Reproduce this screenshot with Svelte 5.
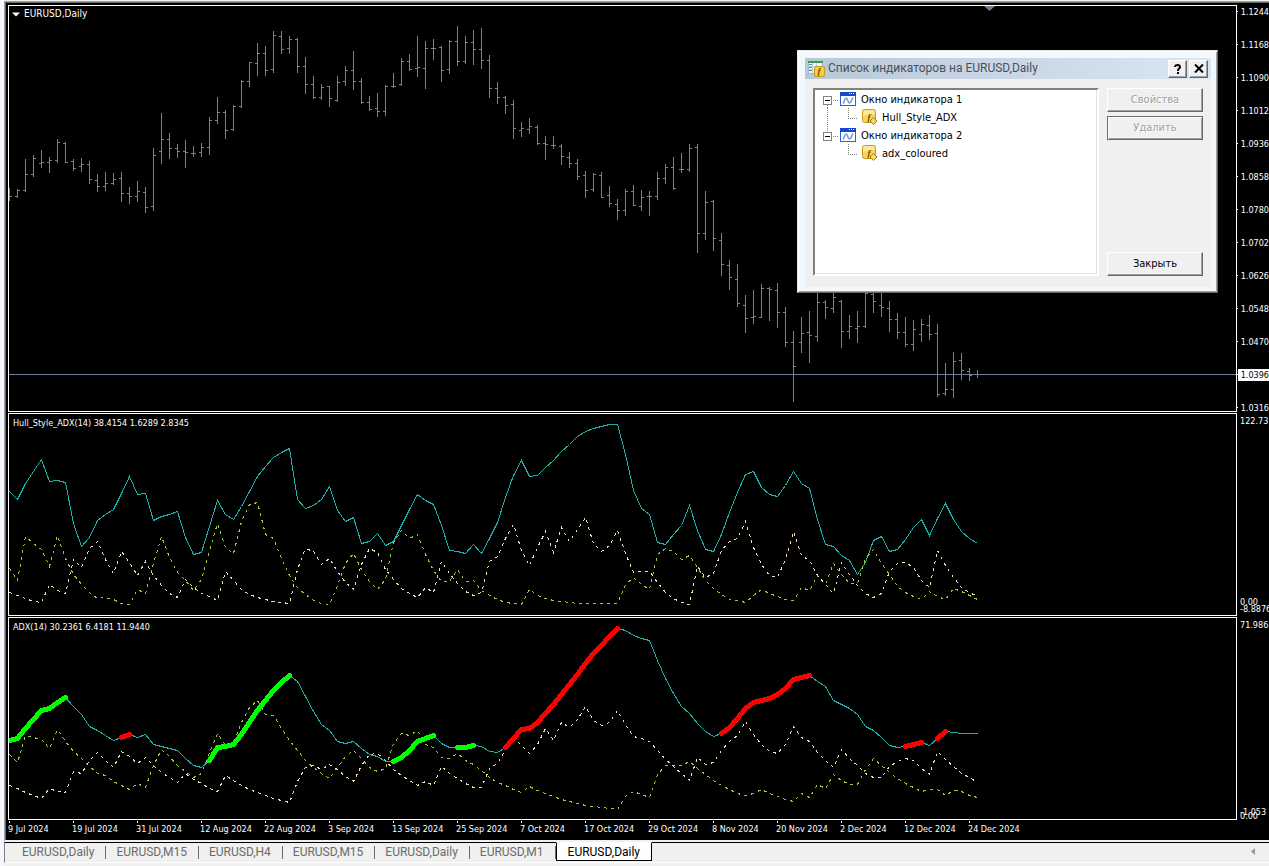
<script>
  const STEP = 8;

  // open, high, low, close as vertical plot positions
  const bars = [
    [196,188,200,196],[196,189,197,190],[190,159,191,174],[174,155,176,158],[163,150,167,162],[162,157,172,160],[160,139,162,142],[143,142,162,162],
    [161,159,170,168],[166,158,171,164],[164,161,183,179],[180,174,191,186],[186,172,190,183],[183,173,184,179],[178,172,201,193],[193,187,203,196],
    [196,181,201,191],[192,187,212,207],[206,148,210,155],[151,113,163,139],[139,133,158,148],[148,144,157,151],[151,140,167,152],[153,146,156,153],
    [152,143,156,147],[147,117,154,120],[120,97,123,112],[112,110,138,130],[129,105,130,106],[106,80,107,81],[81,62,86,62],[63,43,75,53],
    [53,46,75,70],[69,31,72,35],[36,31,53,49],[48,36,53,39],[39,38,72,66],[66,57,93,84],[84,76,98,97],[97,84,99,87],
    [86,86,106,98],[100,76,101,82],[81,66,85,70],[70,51,89,81],[81,78,103,102],[102,96,110,109],[108,93,116,111],[111,85,115,86],
    [86,73,87,86],[84,58,85,61],[61,54,70,69],[68,36,76,67],[68,41,88,48],[48,39,59,48],[47,46,81,70],[69,40,73,41],
    [41,26,65,61],[61,36,63,42],[42,30,64,49],[49,28,68,60],[60,55,97,88],[88,82,103,97],[97,96,113,105],[104,100,138,128],
    [130,122,136,128],[129,118,133,126],[127,125,144,143],[143,136,159,144],[145,136,148,145],[146,144,164,156],[157,152,167,163],[163,159,179,176],
    [175,171,197,190],[189,173,191,174],[175,172,197,197],[195,186,206,203],[204,199,219,210],[210,189,215,191],[191,185,205,205],[206,190,210,197],
    [196,191,215,196],[196,172,199,178],[178,164,183,167],[167,157,189,188],[169,153,172,169],[169,144,171,148],[147,144,252,233],[233,191,239,202],
    [201,200,250,238],[240,233,275,264],[265,260,289,277],[279,264,306,303],[305,295,332,318],[317,290,323,316],[317,284,317,288],[288,287,320,289],
    [290,283,327,312],[312,307,346,342],[342,331,401,366],[342,317,352,333],[332,311,362,335],[336,262,341,302],[302,300,318,307],[308,270,312,297],
    [301,300,347,331],[331,315,338,326],[328,311,342,326],[326,280,327,293],[294,288,312,301],[305,285,316,307],[308,301,331,319],[319,313,338,332],
    [332,317,346,344],[344,320,350,329],[334,319,341,324],[325,315,339,334],[333,324,396,394],[393,363,395,389],[389,352,397,361],[360,353,379,370],
    [371,368,380,375],[374,370,377,374]
  ];

  const hullAdx = [491,499,483,471,459,481,480,482,523,546,537,520,514,509,493,476,494,493,520,516,514,511,537,554,552,526,500,514,519,506,491,476,466,457,452,448,499,508,505,499,486,510,521,517,543,541,533,545,541,525,509,494,500,504,525,550,551,553,544,553,538,522,497,475,460,476,475,467,460,451,444,436,431,428,426,424,424,454,490,508,514,542,544,534,525,505,530,549,551,534,512,492,474,471,487,494,496,485,471,483,488,519,544,546,555,560,574,562,540,536,551,549,539,527,519,535,518,503,519,531,538,543];
  const hullPlus = [568,580,536,543,549,566,535,558,574,584,592,598,597,599,603,604,589,593,563,536,557,572,580,590,579,550,523,547,553,521,504,502,534,538,558,575,587,594,600,603,604,585,563,553,569,581,589,579,542,530,538,534,554,570,581,581,569,581,580,590,595,599,602,603,604,589,595,598,600,601,602,603,603,603,603,603,603,584,577,584,589,554,548,551,559,555,567,580,588,594,599,600,602,595,589,593,596,599,600,587,590,575,584,563,574,583,583,558,549,563,574,586,592,596,599,591,596,599,588,591,595,599];
  const hullMinus = [592,595,598,601,602,584,590,593,559,567,548,541,559,573,551,562,575,561,575,585,593,597,579,587,593,596,600,571,580,589,594,597,599,601,602,603,569,548,551,564,558,571,582,589,564,548,552,569,579,588,593,597,587,592,561,573,583,591,595,592,561,556,538,524,550,565,547,531,552,527,541,529,517,543,551,545,530,553,572,571,571,582,592,598,602,604,566,577,573,550,541,538,521,547,564,575,577,559,531,555,560,575,584,593,562,574,585,593,597,593,571,563,562,567,580,587,550,565,577,587,592,596];

  const adx = [740,738,728,719,710,708,702,697,706,714,726,730,735,740,737,734,737,734,744,746,748,750,758,765,767,760,747,746,744,734,722,710,700,690,682,675,681,696,711,724,730,741,743,741,748,754,756,761,761,757,750,741,738,735,743,747,747,747,745,746,751,752,747,738,729,728,722,713,704,694,684,674,663,653,645,636,628,630,635,638,640,660,678,693,706,713,723,731,736,733,727,718,708,702,700,698,694,688,679,677,675,681,686,700,704,708,714,726,730,737,745,747,746,744,742,745,738,731,732,733,733,733];
  const adxPlus = [754,762,735,737,739,748,729,741,751,758,766,773,775,781,785,789,783,787,765,749,756,765,771,777,773,752,733,745,743,722,707,700,714,715,728,740,750,760,767,773,778,767,756,750,758,767,771,768,743,733,735,730,744,747,757,758,753,760,764,770,777,782,785,789,792,786,790,793,796,799,801,803,805,806,807,808,809,796,791,794,797,774,765,765,765,761,768,774,780,785,789,793,795,793,789,793,796,799,801,793,797,784,788,774,780,784,784,769,758,765,772,778,783,787,791,789,789,795,790,791,795,797];
  const adxMinus = [785,788,792,795,798,788,791,792,771,773,760,752,760,767,751,756,763,757,765,772,777,782,773,779,783,788,791,775,780,785,789,792,795,798,800,802,781,767,765,769,764,769,776,781,765,754,753,760,769,775,780,785,781,785,766,773,778,783,787,787,768,763,749,737,745,753,744,728,740,722,727,719,706,720,725,722,710,724,736,738,741,750,759,766,773,780,757,764,762,750,741,735,721,734,744,751,753,744,726,737,741,752,760,767,749,758,765,773,777,777,766,761,758,760,768,774,751,759,766,773,777,782];

  const trends = [
    ['lime', 0, 7], ['red', 14, 15], ['lime', 25, 35], ['lime', 48, 53], ['lime', 56, 58],
    ['red', 62, 76], ['red', 89, 100], ['red', 112, 114], ['red', 116, 117]
  ];

  const prices = ['1.1244','1.1168','1.1090','1.1012','1.0936','1.0858','1.0780','1.0702','1.0626','1.0548','1.0470','1.0396','1.0316'];
  const CURRENT = 11;
  const dates = ['9 Jul 2024','19 Jul 2024','31 Jul 2024','12 Aug 2024','22 Aug 2024','3 Sep 2024','13 Sep 2024','25 Sep 2024','7 Oct 2024','17 Oct 2024','29 Oct 2024','8 Nov 2024','20 Nov 2024','2 Dec 2024','12 Dec 2024','24 Dec 2024'];
  const tabs = ['EURUSD,Daily','EURUSD,M15','EURUSD,H4','EURUSD,M15','EURUSD,Daily','EURUSD,M1','EURUSD,Daily'];
  const tree = [
    { name: 'Окно индикатора 1', child: 'Hull_Style_ADX' },
    { name: 'Окно индикатора 2', child: 'adx_coloured' }
  ];

  let activeTab = $state(6);
  let open = $state(true);

  const points = (ys, from = 0, to = ys.length - 1) =>
    ys.slice(from, to + 1).map((y, k) => `${(from + k) * STEP + 0.5},${y + 0.5}`).join(' ');

  const barPath = bars
    .map(([o, h, l, c], i) => {
      const x = i * STEP;
      return `M${x + 0.5} ${h}V${l + 1}M${x - 2} ${o + 0.5}H${x}M${x + 1} ${c + 0.5}H${x + 3}`;
    })
    .join('');
</script>

{#snippet functionIcon()}
  <svg class="icon" width="16" height="16" viewBox="0 0 16 16" aria-hidden="true">
    <rect x="0.500" y="0.500" width="13" height="13" rx="2" fill="#f5d458" stroke="#c99a1c" />
    <path d="M1 7V3Q1 1 3 1H11Q13 1 13 3V5Q6 5 1 7Z" fill="#fbe994" />
    <text x="7" y="11" class="fn">f</text>
    <path d="M11.500 8.500L15 12L11.500 15.500L8 12Z" fill="#f8dc62" stroke="#a87a12" />
  </svg>
{/snippet}

<div class="app">
  <main class="frame">
    <section class="row">
      <div class="plot">
        <h1 class="caption symbol">
          <svg width="8" height="5" viewBox="0 0 8 5" aria-hidden="true"><path d="M0 0.500H8L4 4.500Z" fill="#fff" /></svg>
          EURUSD,Daily
        </h1>
        <svg class="chart" height="405" role="img" aria-label="EURUSD,Daily">
          <path d="M975 0H986L980.500 5Z" fill="#708090" />
          <g transform="translate(0 -6)" shape-rendering="crispEdges" fill="none">
            <path d={barPath} stroke="#808080" />
            <line x1="0" x2="100%" y1="374.5" y2="374.5" stroke="#708090" />
          </g>
        </svg>
      </div>
      <ol class="scale prices">
        {#each prices as price, i}
          <li class:current={i === CURRENT}><span>{price}</span></li>
        {/each}
      </ol>
    </section>

    <section class="row">
      <div class="plot">
        <h2 class="caption">Hull_Style_ADX(14) 38.4154 1.6289 2.8345</h2>
        <svg class="chart" height="201" role="img" aria-label="Hull_Style_ADX">
          <g transform="translate(0 -414)" shape-rendering="crispEdges" fill="none">
            <polyline points={points(hullAdx)} stroke="#20b2aa" />
            <polyline points={points(hullPlus)} stroke="#9acd32" stroke-dasharray="3 4" />
            <polyline points={points(hullMinus)} stroke="#f5deb3" stroke-dasharray="3 4" />
          </g>
        </svg>
      </div>
      <div class="scale range">
        <span>122.73</span>
        <span class="low">0.00</span>
        <span>-8.8876</span>
      </div>
    </section>

    <section class="row">
      <div class="plot">
        <h2 class="caption">ADX(14) 30.2361 6.4181 11.9440</h2>
        <svg class="chart" height="201" role="img" aria-label="ADX">
          <g transform="translate(0 -618)" shape-rendering="crispEdges" fill="none">
            <polyline points={points(adx)} stroke="#20b2aa" />
            <polyline points={points(adxPlus)} stroke="#9acd32" stroke-dasharray="3 4" />
            <polyline points={points(adxMinus)} stroke="#f5deb3" stroke-dasharray="3 4" />
            {#each trends as [color, from, to]}
              <polyline points={points(adx, from, to)} stroke={color} stroke-width="5" stroke-linecap="round" stroke-linejoin="round" />
            {/each}
          </g>
        </svg>
      </div>
      <div class="scale range">
        <span>71.986</span>
        <span class="low near">-1.053</span>
        <span>0.00</span>
      </div>
    </section>

    <ol class="dates">
      {#each dates as date}<li>{date}</li>{/each}
    </ol>
  </main>

  <nav class="tabs">
    {#each tabs as tab, i}
      <button type="button" class:active={i === activeTab} onclick={() => (activeTab = i)}>{tab}</button>
    {/each}
    <svg class="scroll" width="4" height="7" viewBox="0 0 4 7" aria-hidden="true"><path d="M4 0V7L0 3.500Z" fill="#999" /></svg>
  </nav>

  {#if open}
    <div class="dialog" role="dialog" aria-labelledby="dialog-title">
      <header>
        <svg class="icon" width="17" height="16" viewBox="0 0 17 16" aria-hidden="true">
          <rect x="0.500" y="0.500" width="14" height="12" fill="#eef5fb" stroke="#9dbcd6" />
          <path d="M0 1H15" stroke="#3f9a4d" stroke-width="2" />
          <path d="M1 5.500H14M1 8.500H14M4.500 2V12M8.500 2V12" stroke="#b9d3e4" />
          <path d="M1 3.500H4M1 6.500H4M1 9.500H4" stroke="#5b8f8a" />
          <rect x="6.500" y="5.500" width="10" height="10" rx="1.500" fill="#f7cf3c" stroke="#c99a1c" />
          <text x="11" y="13" class="fn">f</text>
        </svg>
        <h2 id="dialog-title">Список индикаторов на EURUSD,Daily</h2>
        <button type="button" class="sys" aria-label="Справка">
          <svg width="8" height="10" viewBox="0 0 8 10" aria-hidden="true">
            <path d="M1 3V2.500Q1.500 1 3.500 1Q6 1 6 3Q6 4 4.800 4.800Q4 5.400 4 7M4 8V10" fill="none" stroke="#000" stroke-width="2" />
          </svg>
        </button>
        <button type="button" class="sys" aria-label="Закрыть окно" onclick={() => (open = false)}>
          <svg width="10" height="9" viewBox="0 0 10 9" aria-hidden="true">
            <path d="M1 0.500L9 8.500M9 0.500L1 8.500" stroke="#000" stroke-width="2" />
          </svg>
        </button>
      </header>
      <div class="body">
        <ul class="tree">
          {#each tree as node, i}
            <li>
              <div class="node">
                <svg width="17" height="18" viewBox="0 0 17 18" shape-rendering="crispEdges" aria-hidden="true">
                  <path d="M10 10.500H16" stroke="#808080" stroke-dasharray="1 1" />
                  <path d={i === 0 ? 'M4.500 15V18' : 'M4.500 0V5'} stroke="#808080" stroke-dasharray="1 1" />
                  <rect x="0.500" y="6.500" width="8" height="8" fill="#fff" stroke="#808080" />
                  <path d="M2 10.500H7" stroke="#000" />
                </svg>
                <svg class="icon" width="16" height="14" viewBox="0 0 16 14" aria-hidden="true">
                  <rect x="0.500" y="0.500" width="15" height="13" fill="#fff" stroke="#2a62d4" />
                  <rect width="16" height="4" fill="#1249cf" />
                  <path d="M9 1.500H10M11 1.500H12M13 1.500H14" stroke="#fff" />
                  <path d="M3 11.500C4.500 10 4.500 6 6 6C8 6 7.500 11 9.500 11C11.500 11 11 8 13 5.500" fill="none" stroke="#6c97e0" stroke-width="1.500" />
                </svg>
                <span>{node.name}</span>
              </div>
              <div class="node child">
                <svg width="35" height="18" viewBox="0 0 35 18" shape-rendering="crispEdges" aria-hidden="true">
                  {#if i === 0}<path d="M4.500 0V18" stroke="#808080" stroke-dasharray="1 1" />{/if}
                  <path d="M25.500 0V10M25 10.500H36" fill="none" stroke="#808080" stroke-dasharray="1 1" />
                </svg>
                {@render functionIcon()}
                <span>{node.child}</span>
              </div>
            </li>
          {/each}
        </ul>
        <div class="actions">
          <button type="button" disabled>Свойства</button>
          <button type="button" class="default" disabled>Удалить</button>
          <button type="button" class="close" onclick={() => (open = false)}>Закрыть</button>
        </div>
      </div>
    </div>
  {/if}
</div>

<style>
  :global(body) {
    margin: 0;
    background: #f0f0f0;
  }
  .app {
    position: relative;
    min-height: 100vh;
    box-sizing: border-box;
    padding: 1px 0 0 4px;
    overflow: hidden;
    background: linear-gradient(90deg, #f3f7fd 4px, #f0f0f0 4px);
    font-family: "DejaVu Sans Condensed", "DejaVu Sans", sans-serif;
    font-size: 11px;
  }
  h1, h2, ul, ol {
    margin: 0;
    padding: 0;
    list-style: none;
    font-weight: normal;
  }
  svg {
    display: block;
    flex: none;
  }
  .frame {
    display: flex;
    flex-direction: column;
    gap: 1px;
    padding: 3px 0 0 3px;
    background: #000;
    border-left: 1px solid #a0a0a0;
    border-top: 1px solid #a0a0a0;
    border-bottom: 2px solid #f4eef4;
    box-shadow: inset 1px 1px #696969;
    color: #fff;
    font-size: 9px;
  }
  .row {
    display: grid;
    grid-template-columns: minmax(0, 1fr) 32px;
  }
  .plot {
    position: relative;
    border: 1px solid #fff;
  }
  .chart {
    width: 100%;
    overflow: hidden;
  }
  .caption {
    position: absolute;
    top: 3px;
    left: 4px;
    display: flex;
    align-items: center;
    gap: 4px;
    font-size: 9px;
    line-height: 12px;
    white-space: nowrap;
  }
  .symbol {
    top: 2px;
    left: 3px;
    font-size: 10px;
  }
  .scale {
    white-space: nowrap;
    line-height: 12px;
  }
  .prices {
    margin: -10px 0 -14px;
  }
  .prices li {
    display: flex;
    align-items: center;
    height: 33px;
  }
  .prices li::before {
    content: "";
    width: 2px;
    height: 1px;
    background: #fff;
  }
  .prices span {
    flex: 1;
    padding-left: 3px;
  }
  .prices .current span {
    background: #fff;
    color: #000;
  }
  .range {
    display: flex;
    flex-direction: column;
    padding: 2px 0 1px 3px;
  }
  .range .low {
    margin-top: auto;
    margin-bottom: -5px;
  }
  .range .near {
    margin-bottom: -8px;
  }
  .range .near + span {
    margin-bottom: -3px;
  }
  .dates {
    display: flex;
    height: 19px;
    overflow: hidden;
  }
  .dates li {
    flex: 0 0 64px;
    line-height: 16px;
    white-space: nowrap;
    background: linear-gradient(#fff, #fff) 1px 0 / 1px 2px no-repeat;
  }
  .tabs {
    display: flex;
    align-items: flex-start;
    height: 19px;
    border-top: 1px solid #000;
    border-left: 1px solid #808080;
    border-bottom: 1px solid #fff;
    padding-left: 7px;
  }
  .tabs button {
    position: relative;
    height: 18px;
    padding: 0 12px 0 10px;
    border: 0;
    background: none;
    color: #6b6b6b;
    font: 12px/18px Roboto, "Noto Sans", sans-serif;
    white-space: nowrap;
  }
  .tabs button:not(.active)::after {
    content: "";
    position: absolute;
    right: 0;
    top: 3px;
    height: 13px;
    border-right: 1px solid #6b6b6b;
  }
  .tabs button.active {
    height: 19px;
    margin-top: -1px;
    padding: 0 11px;
    border: 1px solid #000;
    border-top-color: #fff;
    background: #fff;
    color: #000;
  }
  .scroll {
    margin: 5px 14px 0 auto;
  }
  .dialog {
    position: absolute;
    top: 50px;
    right: 51px;
    width: 421px;
    box-sizing: border-box;
    padding: 7px 6px 5px 7px;
    background: #f3f8fd;
    border: 1px solid;
    border-color: #e8e8e8 #696969 #696969 #e8e8e8;
    box-shadow: inset 1px 1px #fff, inset -1px -1px #a0a0a0;
  }
  .dialog header {
    display: flex;
    align-items: center;
    height: 21px;
    padding: 0 3px;
    background: linear-gradient(90deg, #b9c8d8, #d9e6f3);
  }
  .dialog h2 {
    flex: 1;
    margin-left: 3px;
    color: #4a5058;
    font: 12px/21px Roboto, "Noto Sans", sans-serif;
    white-space: nowrap;
  }
  .dialog button {
    display: flex;
    align-items: center;
    justify-content: center;
    box-sizing: border-box;
    padding: 0;
    background: #f0f0f0;
    border: 1px solid;
    border-color: #fff #696969 #696969 #fff;
    box-shadow: inset -1px -1px #a0a0a0;
    color: #000;
    font: 11px/14px "DejaVu Sans Condensed", "DejaVu Sans", sans-serif;
  }
  .dialog .sys {
    width: 19px;
    height: 18px;
    margin-left: 2px;
  }
  .body {
    display: flex;
    gap: 8px;
    padding: 9px 8px 11px;
    background: #f0f0f0;
  }
  .tree {
    flex: 1;
    height: 184px;
    background: #fff;
    border: 2px solid;
    border-color: #808080 #fff #fff #808080;
    box-shadow: inset -1px -1px #e3e3e3;
  }
  .node {
    display: flex;
    align-items: center;
    height: 18px;
    padding-left: 8px;
    white-space: nowrap;
  }
  .node span {
    padding-left: 5px;
  }
  .child svg + .icon {
    margin-left: 4px;
  }
  .child span {
    padding-left: 4px;
  }
  .fn {
    font: italic bold 9px "Liberation Serif", serif;
    fill: #6b4a08;
    text-anchor: middle;
  }
  .actions {
    display: flex;
    flex-direction: column;
    gap: 4px;
    width: 96px;
  }
  .actions button {
    height: 24px;
  }
  .actions button:disabled {
    color: #a0a0a0;
    text-shadow: 1px 1px #fff;
  }
  .actions .default {
    border-color: #696969;
    box-shadow: inset 1px 1px #fff, inset -1px -1px #a0a0a0;
  }
  .actions .close {
    margin-top: auto;
  }
</style>
